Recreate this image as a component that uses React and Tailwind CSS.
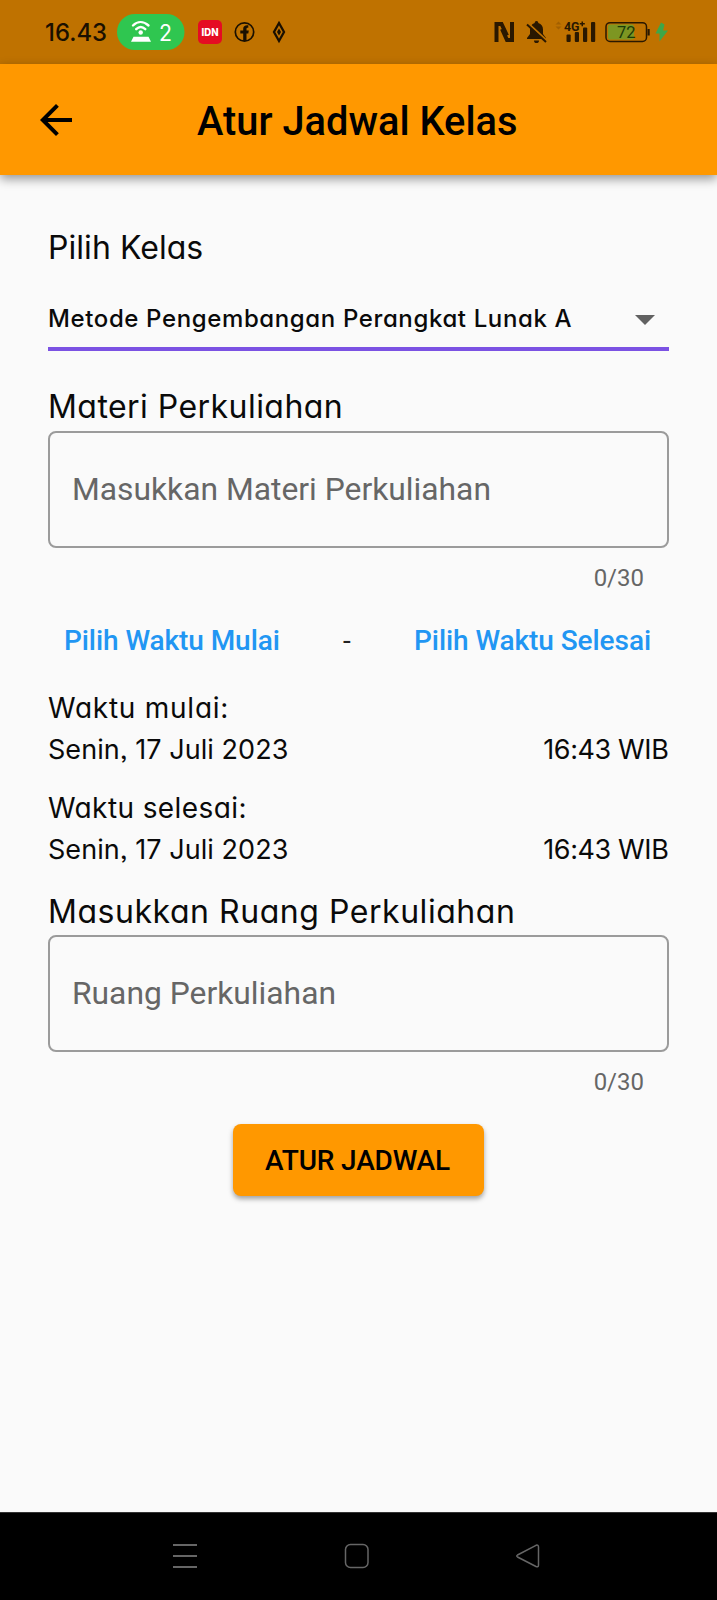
const POP = "font-['Inter','Liberation_Sans',sans-serif] [font-feature-settings:'cv11','ss03']";

function StatusBar() {
  return (
    <div className="flex h-16 w-full items-center bg-[#bf7200]">
      <svg width="717" height="64" viewBox="0 0 717 64" className="block">
        <text x="45" y="41" fontSize="24" fontWeight="500" fontFamily="Inter, sans-serif" textLength="62" lengthAdjust="spacingAndGlyphs" fill="#1a1000">16.43</text>
        <rect x="117" y="14" width="67.500" height="36" rx="18" fill="#2fc650" />
        <g stroke="#fff" fill="none" strokeWidth="2.400" strokeLinecap="round">
          <path d="M133 25.500C137.500 21 143.500 21 148.500 25.500" />
          <path d="M136.200 29.200C139 26.500 142.500 26.500 145.300 29.200" />
        </g>
        <circle cx="140.700" cy="32.500" r="2.200" fill="#fff" />
        <path d="M133.500 36.800H148.500L151 41.800H131Z" fill="#fff" />
        <text x="159" y="41" fontSize="23" fontFamily="Inter, sans-serif" textLength="13" lengthAdjust="spacingAndGlyphs" fill="#fff">2</text>
        <rect x="198" y="20" width="24" height="24" rx="5" fill="#e50b23" />
        <text x="201.500" y="36" fontSize="10.500" fontWeight="800" fontFamily="Inter, sans-serif" textLength="17" lengthAdjust="spacingAndGlyphs" fill="#fff">IDN</text>
        <circle cx="244.500" cy="32" r="9.200" fill="none" stroke="#1a1000" strokeWidth="1.700" />
        <path d="M243.200 41V33.500H240.300V30.600H243.200V28.800C243.200 26.300 245 25 248.300 25.300V27.800C246.800 27.700 246.500 28.200 246.500 29.200V30.600H248.800L248.300 33.500H246.500V41Z" fill="#1a1000" />
        <path d="M279 23L284 32L279 41L274 32Z" fill="none" stroke="#1a1000" strokeWidth="2.300" />
        <path d="M279 28.500L281 32L279 35.500L277 32Z" fill="#1a1000" />
        <g fill="none" stroke="#2a1800" strokeWidth="4">
          <path d="M496.500 42V24H501.500L507 35.500" />
          <path d="M512 22V40H507L502 29" />
        </g>
        <path d="M536.500 21C537.600 21 538.300 21.800 538.300 23C541.500 24 543 26.500 543 29.500V34L546 38V39H527V38L530 34V29.500C530 26.500 531.500 24 534.700 23C534.700 21.800 535.400 21 536.500 21ZM534 40.500H539C539 42.500 538 43 536.500 43C535 43 534 42.500 534 40.500Z" fill="#2a1800" />
        <path d="M527.500 22.800L547.500 41.200" stroke="#bf7200" strokeWidth="2.200" />
        <path d="M527 24.500L546 42" stroke="#2a1800" strokeWidth="2" />
        <path d="M555.500 24.500L558.500 21.500L561.500 24.500ZM555.500 26.500L558.500 29.500L561.500 26.500Z" fill="#a36000" />
        <g fill="#2a1800">
          <rect x="566.500" y="34.500" width="4.200" height="7.500" rx="1" />
          <rect x="574.800" y="32" width="4.200" height="10" rx="1" />
          <rect x="583" y="27.500" width="4.200" height="14.500" rx="1" />
          <rect x="591" y="22" width="4.200" height="20" rx="1" />
          <path d="M581.500 21.500H583V23H584.800V24.600H583V26.300H581.500V24.600H579.800V23H581.500Z" />
        </g>
        <text x="564" y="30.500" fontSize="12.500" fontWeight="700" fontFamily="Roboto, sans-serif" textLength="15.500" lengthAdjust="spacingAndGlyphs" fill="#2a1800">4G</text>
        <rect x="608" y="24.500" width="26" height="15" rx="2" fill="#7d9622" />
        <rect x="606" y="22.700" width="40.500" height="18.800" rx="4" fill="none" stroke="#2a1800" strokeWidth="1.500" />
        <rect x="647.500" y="29" width="2.200" height="6.500" fill="#2a1800" />
        <text x="617" y="38" fontSize="16.500" fontFamily="Roboto, sans-serif" textLength="18.500" lengthAdjust="spacingAndGlyphs" fill="#1c3a08">72</text>
        <path d="M661 22.500L655.500 33.500H659.500L659.500 41.500L668 30.500H663L664.500 24.500Z" fill="#3fa648" />
      </svg>
    </div>
  );
}

function Field({ placeholder }) {
  return (
    <>
      <div className="flex h-[117px] items-center rounded-[8px] border-2 border-[#9b9b9b] px-[22px] pb-[2px]">
        <span className="whitespace-nowrap text-[31.8px] leading-[40px] text-[#666]">{placeholder}</span>
      </div>
      <div className="mt-4 pr-[25px] text-right text-[24px] leading-[28px] text-[#666]">0/30</div>
    </>
  );
}

function TimeBlock({ label, className, labelClass }) {
  return (
    <div className={POP + " text-[27px] leading-[42px] " + className}>
      <div className={labelClass}>{label}</div>
      <div className="flex justify-between">
        <span className="tracking-[0.05px]">Senin, 17 Juli 2023</span>
        <span className="mr-[0.6px] tracking-[-0.4px]">16:43 WIB</span>
      </div>
    </div>
  );
}

export default function App() {
  return (
    <div className="flex h-[1600px] w-[717px] flex-col overflow-hidden bg-[#fafafa] font-['Roboto',sans-serif] text-[#0a0a0a]">
      <StatusBar />
      <header className="flex h-[111px] shrink-0 items-center bg-[#ff9800] pl-8 shadow-[0_4px_10px_rgba(0,0,0,0.4)]">
        <svg width="48" height="48" viewBox="0 0 24 24" fill="#000">
          <path d="M20 11H7.830l5.590-5.590L12 4l-8 8 8 8 1.410-1.410L7.830 13H20v-2z" />
        </svg>
        <h1 className="ml-[117px] mt-[4px] whitespace-nowrap text-[39.8px] font-medium leading-[48px] text-black">Atur Jadwal Kelas</h1>
      </header>
      <main className="flex flex-1 flex-col px-12 pt-[49px]">
        <div className={POP + " text-[32px] leading-[48px] tracking-[0.05px]"}>Pilih Kelas</div>
        <div className={POP + " mt-[23px] flex items-center justify-between border-b-4 border-[#7b52e3] pb-1 pr-[14px] text-[24px] font-medium leading-[48px] tracking-[0.62px]"}>
          <span className="whitespace-nowrap">Metode Pengembangan Perangkat Lunak A</span>
          <svg width="20" height="10" viewBox="0 0 20 10" fill="#616161" className="mt-px"><path d="M0 0H20L10 10Z" /></svg>
        </div>
        <div className={POP + " mt-8 text-[32px] leading-[48px] tracking-[0.45px]"}>Materi Perkuliahan</div>
        <Field placeholder="Masukkan Materi Perkuliahan" />
        <div className="mt-[33px] flex items-center justify-between pl-4 pr-[18px] text-[28px] font-medium leading-[32px] tracking-[-0.07px] text-[#2196f3]">
          <span>Pilih Waktu Mulai</span>
          <span className="font-normal text-[#222]">-</span>
          <span>Pilih Waktu Selesai</span>
        </div>
        <TimeBlock label="Waktu mulai:" className="mt-[30px]" labelClass="text-[28px] tracking-[0.75px]" />
        <TimeBlock label="Waktu selesai:" className="mt-4" labelClass="text-[28px] tracking-[0.4px]" />
        <div className={POP + " mt-4 text-[32px] leading-[50px] -mb-[2px] tracking-[0.54px]"}>Masukkan Ruang Perkuliahan</div>
        <Field placeholder="Ruang Perkuliahan" />
        <button className="mt-7 flex h-[72px] w-[251px] items-center justify-center self-center rounded-[8px] bg-[#ff9800] pr-[2px] pt-[2px] text-[28px] font-medium tracking-[-0.17px] text-black shadow-[0_3px_5px_rgba(0,0,0,0.35)]">ATUR JADWAL</button>
      </main>
      <nav className="flex h-[88px] shrink-0 items-center justify-between border-t border-[#333] bg-black pb-[2px] pl-[172px] pr-[176px]">
        <svg width="26" height="26" viewBox="0 0 26 26" stroke="#666" strokeWidth="2"><path d="M1 2H25M1 13H25M1 24H25" /></svg>
        <svg width="26" height="26" viewBox="0 0 26 26" fill="none" stroke="#666" strokeWidth="1.500"><rect x="1.500" y="1.500" width="22.500" height="23" rx="5" /></svg>
        <svg width="26" height="26" viewBox="0 0 26 26" fill="none" stroke="#666" strokeWidth="1.500" strokeLinejoin="round"><path d="M2.500 12L21 2.300Q23.500 1.500 23.500 4V22Q23.500 24.500 21 23.500L2.500 14Q1 13 2.500 12Z" /></svg>
      </nav>
    </div>
  );
}
